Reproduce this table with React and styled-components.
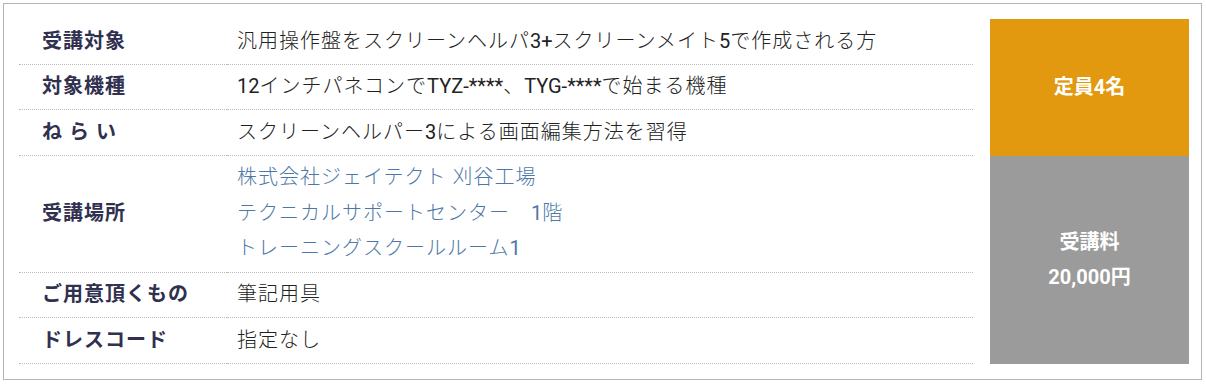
import React from 'react';
import styled, { createGlobalStyle } from 'styled-components';

const GlobalStyle = createGlobalStyle`
  html, body {
    margin: 0;
    padding: 0;
    background: #fff;
  }
  body {
    font-family: Roboto, 'Noto Sans CJK JP', sans-serif;
    color: #333;
  }
`;

const Page = styled.div`
  padding: 3px 4px 0 3px;
`;

const Frame = styled.section`
  border: 1px solid #b4b4b4;
  padding: 15px 12px 15px 15px;
`;

const Grid = styled.div`
  display: grid;
  grid-template-columns: 208px 1fr 216px;
  grid-template-rows: repeat(6, auto);
`;

const Cell = styled.div`
  border-bottom: 1px dotted #bdbdbd;
  padding: 4.5px 0;
  font-size: 20px;
  line-height: 35.6px;
  letter-spacing: 1px;
  display: flex;
  flex-direction: column;
  justify-content: center;
`;

const Label = styled(Cell)`
  padding-left: 23px;
  font-weight: 700;
  color: #30304f;
`;

const Value = styled(Cell)`
  padding-left: 10px;
  font-weight: 300;
  color: ${(p) => (p.$link ? '#4c77a6' : '#222')};
  white-space: nowrap;
`;

const Latin = styled.span`
  font-family: Roboto, sans-serif;
  font-weight: 400;
  letter-spacing: 0;
`;

const SideBox = styled.div`
  grid-column: 3;
  grid-row: ${(p) => p.$rows};
  margin-left: 17px;
  background: ${(p) => p.$bg};
  color: #fff;
  font-weight: 700;
  font-size: 20px;
  line-height: 35px;
  display: flex;
  flex-direction: column;
  align-items: center;
  justify-content: center;
  text-align: center;
`;

const rows = [
  { label: '受講対象', value: ['汎用操作盤をスクリーンヘルパ3+スクリーンメイト5で作成される方'] },
  { label: '対象機種', value: ['12インチパネコンでTYZ-****、TYG-****で始まる機種'] },
  { label: 'ね ら い', value: ['スクリーンヘルパー3による画面編集方法を習得'] },
  {
    label: '受講場所',
    link: true,
    value: ['株式会社ジェイテクト 刈谷工場', 'テクニカルサポートセンター　1階', 'トレーニングスクールルーム1'],
  },
  { label: 'ご用意頂くもの', value: ['筆記用具'] },
  { label: 'ドレスコード', value: ['指定なし'] },
];

// latin runs are set in Roboto regular, the rest in the light Japanese face
function Mixed({ text }) {
  return text.split(/([A-Za-z0-9+\-*,]+)/).map((part, i) =>
    i % 2 ? <Latin key={i}>{part}</Latin> : part
  );
}

export default function App() {
  return (
    <Page>
      <GlobalStyle />
      <Frame>
        <Grid>
          {rows.map((row) => (
            <React.Fragment key={row.label}>
              <Label>{row.label}</Label>
              <Value $link={row.link}>
                {row.value.map((line) => (
                  <span key={line}>
                    <Mixed text={line} />
                  </span>
                ))}
              </Value>
            </React.Fragment>
          ))}
          <SideBox $rows="1 / span 3" $bg="#e2990f">
            定員4名
          </SideBox>
          <SideBox $rows="4 / span 3" $bg="#9b9b9b">
            <span>受講料</span>
            <span>20,000円</span>
          </SideBox>
        </Grid>
      </Frame>
    </Page>
  );
}
